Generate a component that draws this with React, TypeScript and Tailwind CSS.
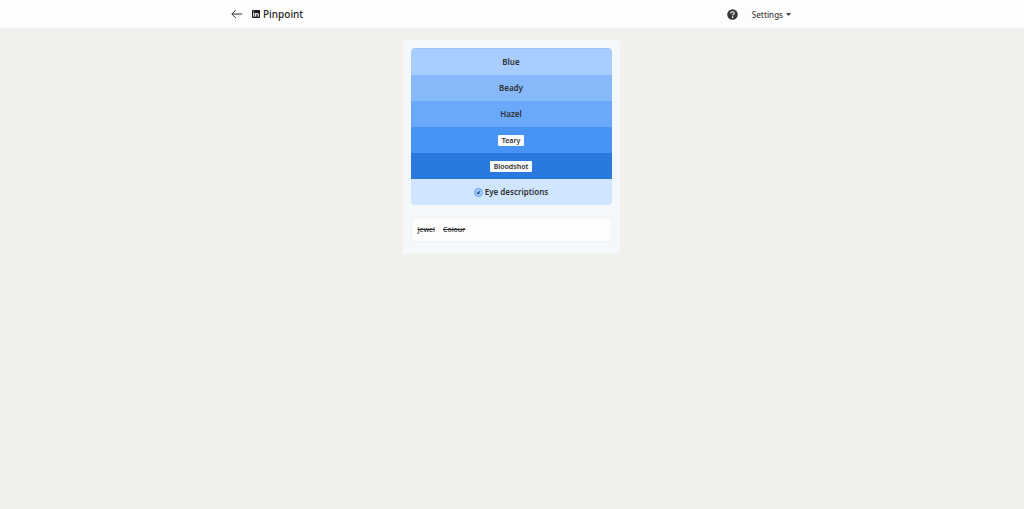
import { useState } from 'react';

type Clue = {
  text: string;
  color: string;
  chip?: boolean;
};

const clues: Clue[] = [
  { text: 'Blue', color: 'bg-[#a8cdff]' },
  { text: 'Beady', color: 'bg-[#86b8fa]' },
  { text: 'Hazel', color: 'bg-[#69a8fb]' },
  { text: 'Teary', color: 'bg-[#4794f5]', chip: true },
  { text: 'Bloodshot', color: 'bg-[#2a79dc]', chip: true },
];

const guesses = ['Jewel', 'Colour'];

function BackIcon() {
  return (
    <svg viewBox="0 0 12 10" className="h-[10px] w-3" fill="none" stroke="#333" strokeWidth="1">
      <path d="M11.3 5H1M4.8 1 0.8 5l4 4" />
    </svg>
  );
}

function LinkedInIcon() {
  return (
    <svg viewBox="0 0 24 24" className="size-2" aria-hidden="true">
      <rect width="24" height="24" rx="2" fill="#1c1c1c" />
      <path
        fill="#fff"
        d="M3.6 9h3.5v11.4H3.6zM5.3 3.4a2 2 0 1 1 0 4.1 2 2 0 0 1 0-4.1zM9.4 9h3.3v1.6c.5-.9 1.7-1.9 3.4-1.9 3.6 0 4.3 2.4 4.3 5.5v6.2h-3.500v-5.500c0-1.300 0-3-1.900-3s-2.100 1.400-2.100 2.900v5.600H9.400z"
      />
    </svg>
  );
}

function HelpIcon() {
  return (
    <svg viewBox="0 0 20 20" className="size-[11px]" fill="none">
      <circle cx="10" cy="10" r="9.600" fill="#383838" />
      <path
        d="M6.800 8c0-1.900 1.300-3.100 3.200-3.100s3.200 1.100 3.200 2.700c0 2.100-3 2.100-3 4.400"
        stroke="#fff"
        strokeWidth="2"
      />
      <circle cx="10.200" cy="14.800" r="1.400" fill="#fff" />
    </svg>
  );
}

function SolvedIcon() {
  return (
    <svg viewBox="0 0 18 18" className="size-[9px]" fill="none" aria-hidden="true">
      <circle cx="9" cy="9" r="7.800" fill="#c2deff" stroke="#3f8ae6" strokeWidth="1.800" />
      <circle cx="9" cy="9" r="4.500" fill="#86b8fa" />
      <path d="m6 9.200 2.200 2.300L12 6.500" stroke="#1d3d63" strokeWidth="2.200" />
    </svg>
  );
}

function Header() {
  const [open, setOpen] = useState(false);

  return (
    <header className="bg-[#fdfdfd] pr-0.5">
      <div className="mx-auto flex h-7 max-w-[560px] items-center">
        <button type="button" aria-label="Back">
          <BackIcon />
        </button>
        <div className="ml-[9px] flex items-center gap-[3px]">
          <LinkedInIcon />
          <h1 className="text-[10px] leading-4 font-medium text-[#262626]">Pinpoint</h1>
        </div>
        <button type="button" aria-label="Help" className="ml-auto">
          <HelpIcon />
        </button>
        <button
          type="button"
          aria-expanded={open}
          onClick={() => setOpen(!open)}
          className="ml-[14px] flex items-center gap-[3px] pt-px text-[8px] leading-3 font-medium text-[#404040]"
        >
          Settings
          <svg viewBox="0 0 5 3" className="h-[3px] w-[5px]" fill="#404040">
            <path d="M0 0h5L2.500 3z" />
          </svg>
        </button>
      </div>
    </header>
  );
}

export default function App() {
  return (
    <div className="min-h-screen bg-[#f1f0ec] font-['Noto_Sans','Open_Sans',sans-serif] text-[#303030]">
      <Header />
      <div className="pr-0.5">
        <main className="mx-auto mt-3 max-w-[217px] rounded-t bg-[#f4f8fb] px-2 pt-2 pb-3">
          <ol className="overflow-hidden rounded-sm border-t border-[#9cc5fb] text-[8px] leading-3 font-semibold">
            {clues.map((clue) => (
              <li key={clue.text} className={`flex h-[26px] items-center justify-center ${clue.color}`}>
                {clue.chip ? (
                  <span className="rounded-[1px] bg-[#f8fafc] px-1 text-[7px] leading-[11px]">{clue.text}</span>
                ) : (
                  clue.text
                )}
              </li>
            ))}
            <li className="flex h-[26px] items-center justify-center gap-[2px] bg-[#d0e6ff]">
              <SolvedIcon />
              Eye descriptions
            </li>
          </ol>
          <ul className="mt-3 flex h-[25px] items-center gap-2 rounded-sm border border-[#eff3f6] bg-[#fdfdfd] px-[6px] text-[7px] leading-3 font-medium">
            {guesses.map((guess) => (
              <li key={guess} className="line-through">
                {guess}
              </li>
            ))}
          </ul>
        </main>
      </div>
    </div>
  );
}
